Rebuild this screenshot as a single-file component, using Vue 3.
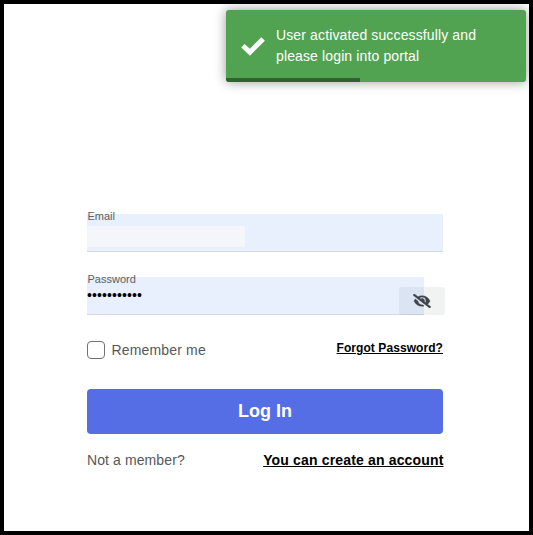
<script setup>
import { ref } from 'vue'

const remember = ref(false)
const password = ref('•••••••••••')
const progress = 44.6
</script>

<template>
  <div class="page">
    <div class="toast" role="status">
      <svg class="check" viewBox="0 0 512 512" aria-hidden="true">
        <path d="M40 250 190 388 472 106" />
      </svg>
      <p>User activated successfully and<br />please login into portal</p>
      <div class="progress" :style="{ width: progress + '%' }"></div>
    </div>

    <form class="login" @submit.prevent>
      <div class="field">
        <label>Email</label>
        <div class="control"><span class="hidden-value"></span></div>
      </div>
      <div class="field">
        <label>Password</label>
        <div class="control short"><span class="dots">{{ password }}</span></div>
        <button class="toggle" type="button" aria-label="Show password">
          <svg viewBox="0 0 640 512" aria-hidden="true">
            <path fill="currentColor" stroke="currentColor" stroke-width="16" d="M320 400c-75.900 0-137.300-58.700-142.900-133.100L72.200 185.800c-13.800 17.300-26.500 35.600-36.700 55.600a32.400 32.400 0 0 0 0 29.200C89.700 376.400 197.100 448 320 448c26.900 0 52.900-4 77.900-10.500L346 397.400a144.100 144.100 0 0 1-26 2.600zm313.800 58.100-110.500-85.400a331.300 331.300 0 0 0 81.200-102.100 32.400 32.400 0 0 0 0-29.200C550.300 135.600 442.900 64 320 64a308.200 308.200 0 0 0-147.300 37.700L45.500 3.400A16 16 0 0 0 23 6.200L3.400 31.400A16 16 0 0 0 6.200 53.900l588.300 454.700a16 16 0 0 0 22.500-2.800l19.600-25.300a16 16 0 0 0-2.800-22.400zM450.100 316.200l-39.300-30.400A94.800 94.800 0 0 0 416 256a94.800 94.800 0 0 0-121.300-92.200A47.700 47.700 0 0 1 304 192a46.600 46.600 0 0 1-1.500 10l-73.600-56.900A142.300 142.300 0 0 1 320 112a143.900 143.900 0 0 1 144 144c0 21.600-5.300 41.800-13.900 60.200z" />
          </svg>
        </button>
      </div>

      <div class="options">
        <label class="remember">
          <input v-model="remember" type="checkbox" />
          <span>Remember me</span>
        </label>
        <a class="forgot">Forgot Password?</a>
      </div>

      <button class="submit" type="submit">Log In</button>

      <div class="signup">
        <span>Not a member?</span>
        <a>You can create an account</a>
      </div>
    </form>
  </div>
</template>

<style>
body {
  margin: 0;
}
</style>

<style scoped>
.page {
  position: relative;
  box-sizing: border-box;
  width: 533px;
  height: 535px;
  padding: 210px 86px 0 83px;
  border: 4px solid #000;
  background: #fff;
  overflow: hidden;
  font-family: "Liberation Sans", Arial, sans-serif;
  color: #54585c;
}

.toast {
  position: absolute;
  top: 6px;
  right: 3px;
  box-sizing: border-box;
  display: flex;
  align-items: center;
  width: 300px;
  height: 72px;
  padding-left: 15px;
  border-radius: 3px;
  background: #51a351;
  box-shadow: 0 0 12px #999;
  color: #fff;
  overflow: hidden;
}

.check {
  width: 24px;
  height: 24px;
  margin-right: 11px;
  fill: none;
  stroke: currentColor;
  stroke-width: 106;
  overflow: visible;
}

.toast p {
  margin: 0;
  font-size: 14px;
  line-height: 21px;
  letter-spacing: 0.13px;
}

.progress {
  position: absolute;
  left: 0;
  bottom: 0;
  height: 4px;
  background: #316231;
}

.field {
  position: relative;
  height: 38px;
  margin-bottom: 25px;
}

.field label {
  position: absolute;
  top: -4px;
  left: 0.5px;
  font-size: 11px;
  line-height: 13px;
  color: #5f6062;
}

.control {
  box-sizing: border-box;
  height: 38px;
  padding-top: 12px;
  border-bottom: 1px solid #d3dae3;
  background: #e8f0fe;
}

.short {
  width: 337px;
}

.hidden-value {
  display: block;
  width: 158px;
  height: 21px;
  background: #f5f6fc;
}

.dots {
  display: block;
  font-size: 14px;
  line-height: 13px;
  letter-spacing: 0.1px;
  color: #000;
}

.toggle {
  position: absolute;
  top: 10px;
  right: -2px;
  display: flex;
  align-items: center;
  justify-content: center;
  width: 46px;
  height: 28px;
  padding: 0;
  border: 0;
  border-radius: 3px;
  background: rgba(20, 50, 50, 0.06);
  color: #3e4449;
}

.toggle svg {
  width: 18px;
  height: 14px;
}

.options {
  display: flex;
  justify-content: space-between;
  height: 49px;
}

.remember {
  display: flex;
  align-items: center;
  gap: 6.5px;
  height: 20px;
  font-size: 14px;
  letter-spacing: 0.16px;
}

.remember input {
  appearance: none;
  box-sizing: border-box;
  width: 18px;
  height: 18px;
  margin: 0;
  border: 1px solid #6f7174;
  border-radius: 4px;
  background: #fff;
}

.forgot {
  font-size: 12px;
  line-height: 16px;
  font-weight: 700;
  letter-spacing: 0.07px;
  color: #000;
  text-decoration: underline;
}

.submit {
  display: block;
  width: 100%;
  height: 45px;
  padding: 0;
  border: 0;
  border-radius: 4px;
  background: #556ee6;
  color: #fff;
  font: 700 18px "Liberation Sans", Arial, sans-serif;
}

.signup {
  display: flex;
  justify-content: space-between;
  padding-top: 18px;
  font-size: 14px;
  line-height: 17px;
  letter-spacing: 0.1px;
}

.signup a {
  margin-right: -0.5px;
  font-weight: 700;
  letter-spacing: 0.16px;
  color: #000;
  text-decoration: underline;
}
</style>
